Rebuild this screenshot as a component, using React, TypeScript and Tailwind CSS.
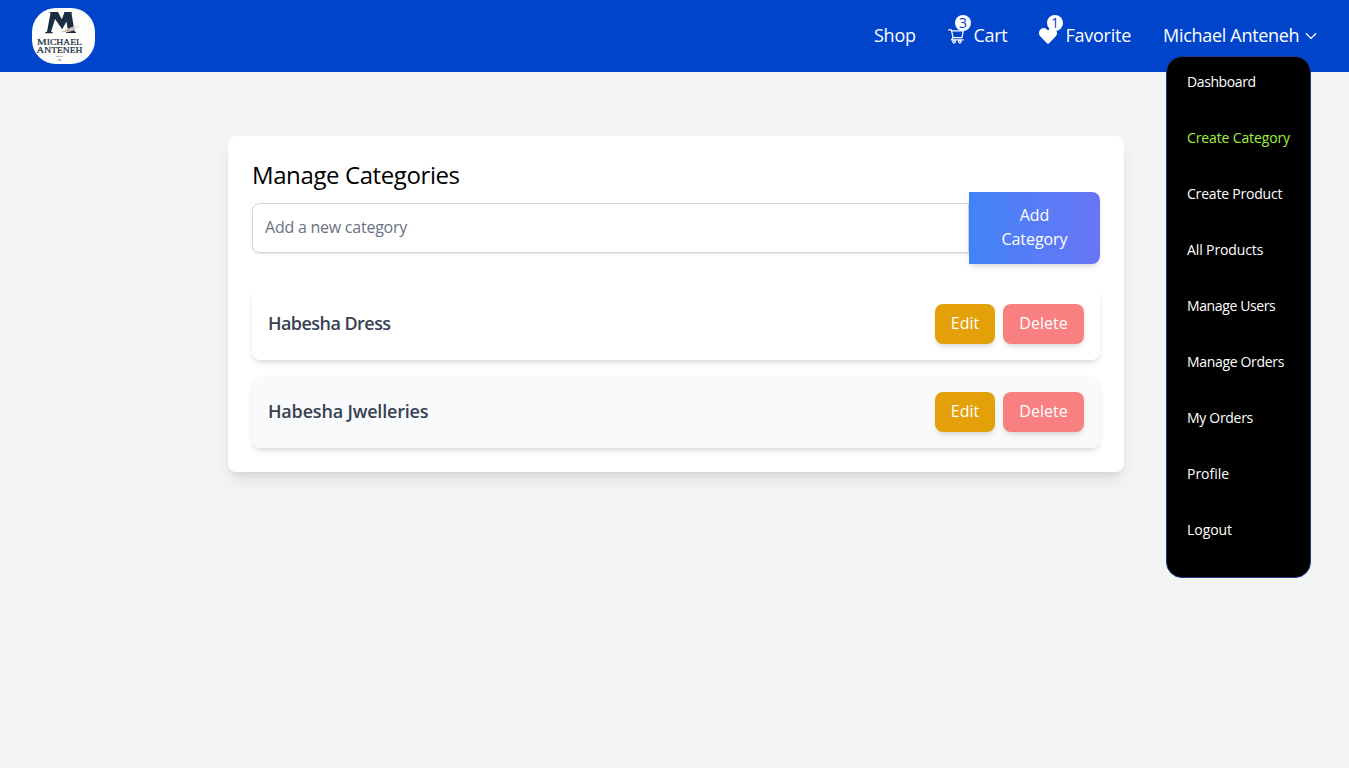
import { AiOutlineShoppingCart } from "react-icons/ai";
import { FaHeart } from "react-icons/fa";

const menu = [
  { label: "Dashboard", style: "text-white tracking-[-0.4px]" },
  { label: "Create Category", style: "text-[#a3f03c] tracking-[-0.13px]" },
  { label: "Create Product", style: "text-white tracking-[-0.2px]" },
  { label: "All Products", style: "text-white tracking-[-0.12px]" },
  { label: "Manage Users", style: "text-white tracking-[-0.38px]" },
  { label: "Manage Orders", style: "text-white tracking-[-0.33px]" },
  { label: "My Orders", style: "text-white tracking-[-0.3px]" },
  { label: "Profile", style: "text-white tracking-[-0.03px]" },
  { label: "Logout", style: "text-white tracking-[-0.05px]" },
];

const categories = [
  { name: "Habesha Dress", row: "bg-white", text: "tracking-[-0.55px]" },
  { name: "Habesha Jwelleries", row: "bg-gray-50", text: "tracking-[-0.18px]" },
];

function Logo() {
  return (
    <svg width="63" height="56" viewBox="0 0 63 56" className="rounded-3xl bg-[#fdfdfc]" aria-label="Michael Anteneh">
      <g fill="#1b2d42">
        <path d="M17 4h9l5 9.500-2 6-6-8.500-4 13 2 .6v.7h-8v-.7l2-.8L18.500 5z" />
        <path d="M32.500 4H40l-.5 1.200 3 18 1.500 1.100v.7H34v-.7l2-.8-1.500-10L30 21.500l-2-5z" />
      </g>
      <path d="M27 24.500c6-1.800 11-5 20-7.500-4 3-7 3.500-9 4.500 3 0 6-1 9-3-5 5-12 5.500-20 6z" fill="#c4a891" stroke="#fdfdfc" strokeWidth=".5" />
      <g fill="#202c43" stroke="#202c43" strokeWidth=".2" fontFamily="Liberation Serif, serif">
        <text x="5" y="37" fontSize="8.600" textLength="45" lengthAdjust="spacingAndGlyphs">
          M<tspan fontSize="7.600">ICHAEL</tspan>
        </text>
        <text x="4.500" y="45" fontSize="8.600" textLength="46" lengthAdjust="spacingAndGlyphs">
          A<tspan fontSize="7.600">NTENEH</tspan>
        </text>
      </g>
      <path d="M24 48.500h7M26 53l1.500-2.500L29 53m-2.500-.7h3" fill="none" stroke="#a9abad" strokeWidth=".8" />
    </svg>
  );
}

function Badge({ count }: { count: number }) {
  return (
    <span className="absolute -top-[6px] left-[7.5px] flex size-4 items-center justify-center rounded-full bg-white text-sm leading-4 text-[#0044cc]">
      {count}
    </span>
  );
}

export default function App() {
  return (
    <div className="min-h-screen bg-gray-100 font-['Open_Sans',sans-serif]">
      <header className="flex h-[72px] items-center justify-between bg-[#0044cc] px-8">
        <Logo />
        <nav className="flex items-center gap-8 pb-0.5 text-lg leading-7 text-white">
          <a className="w-[41.5px] tracking-[-0.25px] whitespace-nowrap">Shop</a>
          <a className="relative flex items-center gap-2">
            <AiOutlineShoppingCart className="mt-0.5 -ml-px mr-px size-[18px]" />
            <Badge count={3} />
            <span className="w-[34px] tracking-[-0.3px] whitespace-nowrap">Cart</span>
          </a>
          <a className="relative flex items-center gap-2">
            <FaHeart className="mt-0.5 -ml-px mr-px size-[18px]" />
            <Badge count={1} />
            <span className="w-[65.5px] tracking-[-0.25px] whitespace-nowrap">Favorite</span>
          </a>
          <div className="relative">
            <button className="flex items-center gap-[5px]">
              <span className="w-[137px] text-left tracking-[-0.3px] whitespace-nowrap">Michael Anteneh</span>
              <svg width="12" height="12" viewBox="0 0 12 12" fill="none" stroke="currentColor" strokeWidth="1.3" strokeLinecap="round" strokeLinejoin="round">
                <path d="M1.300 4.700 6 9.400 10.700 4.700" />
              </svg>
            </button>
            <ul className="absolute top-[35px] left-[3px] flex h-[522px] w-[145px] flex-col gap-9 rounded-2xl border border-[#1e3a8a] bg-black pt-[15px] pl-5 text-sm leading-5">
              {menu.map((m) => (
                <li key={m.label} className={`whitespace-nowrap ${m.style}`}>
                  {m.label}
                </li>
              ))}
            </ul>
          </div>
        </nav>
      </header>

      <main className="mt-16 ml-[228px] w-[896px] rounded-lg bg-white p-6 shadow-lg">
        <h2 className="h-8 text-2xl leading-[30px] tracking-[-0.4px] text-black">Manage Categories</h2>
        <form className="flex items-center">
          <input
            placeholder="Add a new category"
            className="h-[50px] min-w-0 flex-1 rounded-l-lg border border-gray-300 px-3 pb-0.5 tracking-[-0.24px] shadow-sm placeholder:text-gray-500"
          />
          <button type="button" className="w-[131px] rounded-r-lg bg-linear-to-r from-[#3f83f8] to-[#6875f5] px-6 pt-[11px] pb-[13px] leading-6 tracking-[-0.07px] text-white shadow-md">
            Add Category
          </button>
        </form>
        <ul className="mt-6 flex flex-col gap-4">
          {categories.map((c) => (
            <li key={c.name} className={`flex items-center justify-between rounded-lg p-4 shadow-md ${c.row}`}>
              <span className={`pb-0.5 text-lg leading-7 font-semibold text-gray-700 ${c.text}`}>{c.name}</span>
              <div className="flex gap-2 text-white">
                <button className="h-10 w-[60px] rounded-lg bg-[#e3a008] pb-0.5 shadow-md">Edit</button>
                <button className="h-10 w-[81px] rounded-lg bg-[#f98080] pb-0.5 shadow-md">Delete</button>
              </div>
            </li>
          ))}
        </ul>
      </main>
    </div>
  );
}
